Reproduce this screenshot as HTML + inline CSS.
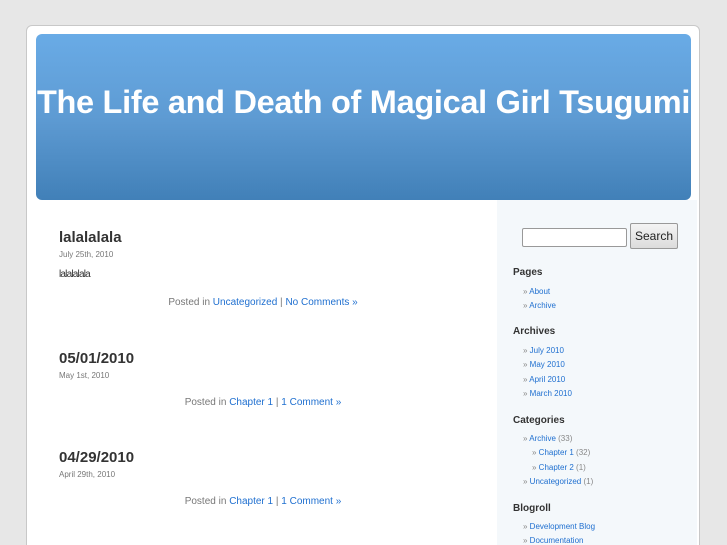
<!DOCTYPE html>
<html><head><meta charset="utf-8"><style>
*{margin:0;padding:0}
html,body{height:545px;overflow:hidden}
body{background:#e7e7e7;width:727px;font-family:"Liberation Sans",sans-serif;position:relative}
#page{position:absolute;left:26px;top:25px;width:672px;height:540px;background:#fff;border:1px solid #c8c8c8;border-radius:6px}
#header{position:absolute;left:36px;top:34px;width:655px;height:166px;border-radius:6px;background:linear-gradient(#69abe6,#5e9bd3 50%,#4180b8)}
#header h1{position:absolute;left:0;width:100%;top:50px;text-align:center;color:#fff;font-size:32.5px;font-weight:bold;letter-spacing:-0.3px}
#side{position:absolute;left:497px;top:200px;width:200px;height:345px;background:#f4f8fb}
a{color:#2070d0;text-decoration:none}
.post{position:absolute;left:59px}
.post h2{font-size:15px;color:#333;font-weight:bold}
.date{font-size:8px;color:#777;margin-top:4px}
.meta{position:absolute;font-size:10px;color:#777;width:408px;text-align:center;left:59px}
.s{position:absolute;font-size:8px;color:#888}
.h{position:absolute;left:513px;font-size:10px;font-weight:bold;color:#333}
</style></head><body>
<div id="page"></div>
<div id="header"><h1>The Life and Death of Magical Girl Tsugumi</h1></div>
<div id="side"></div>
<div class="post" style="top:229px"><h2>lalalalala</h2><div class="date">July 25th, 2010</div><div style="font-size:10px;color:#333;margin-top:10px;letter-spacing:-0.8px">lalalalala</div></div>
<div class="meta" style="top:297px">Posted in <a>Uncategorized</a> | <a>No Comments »</a></div>
<div class="post" style="top:350px"><h2>05/01/2010</h2><div class="date">May 1st, 2010</div></div>
<div class="meta" style="top:397px">Posted in <a>Chapter 1</a> | <a>1 Comment »</a></div>
<div class="post" style="top:449px"><h2>04/29/2010</h2><div class="date">April 29th, 2010</div></div>
<div class="meta" style="top:496px">Posted in <a>Chapter 1</a> | <a>1 Comment »</a></div>
<div style="position:absolute;left:522px;top:228px;width:103px;height:17px;background:#fff;border:1px solid #999;border-radius:2px"></div>
<div style="position:absolute;left:630px;top:223px;width:46px;height:24px;background:linear-gradient(#f4f4f4,#dcdcdc);border:1px solid #999;border-radius:2px;font-size:12px;line-height:24px;text-align:center;color:#222">Search</div>
<div class="h" style="top:267px">Pages</div>
<div class="s" style="left:523px;top:287px">» <a>About</a></div>
<div class="s" style="left:523px;top:301px">» <a>Archive</a></div>
<div class="h" style="top:326px">Archives</div>
<div class="s" style="left:523px;top:346px">» <a>July 2010</a></div>
<div class="s" style="left:523px;top:360px">» <a>May 2010</a></div>
<div class="s" style="left:523px;top:375px">» <a>April 2010</a></div>
<div class="s" style="left:523px;top:389px">» <a>March 2010</a></div>
<div class="h" style="top:415px">Categories</div>
<div class="s" style="left:523px;top:434px">» <a>Archive</a> (33)</div>
<div class="s" style="left:532px;top:448px">» <a>Chapter 1</a> (32)</div>
<div class="s" style="left:532px;top:463px">» <a>Chapter 2</a> (1)</div>
<div class="s" style="left:523px;top:477px">» <a>Uncategorized</a> (1)</div>
<div class="h" style="top:503px">Blogroll</div>
<div class="s" style="left:523px;top:522px">» <a>Development Blog</a></div>
<div class="s" style="left:523px;top:536px">» <a>Documentation</a></div>
</body></html>
